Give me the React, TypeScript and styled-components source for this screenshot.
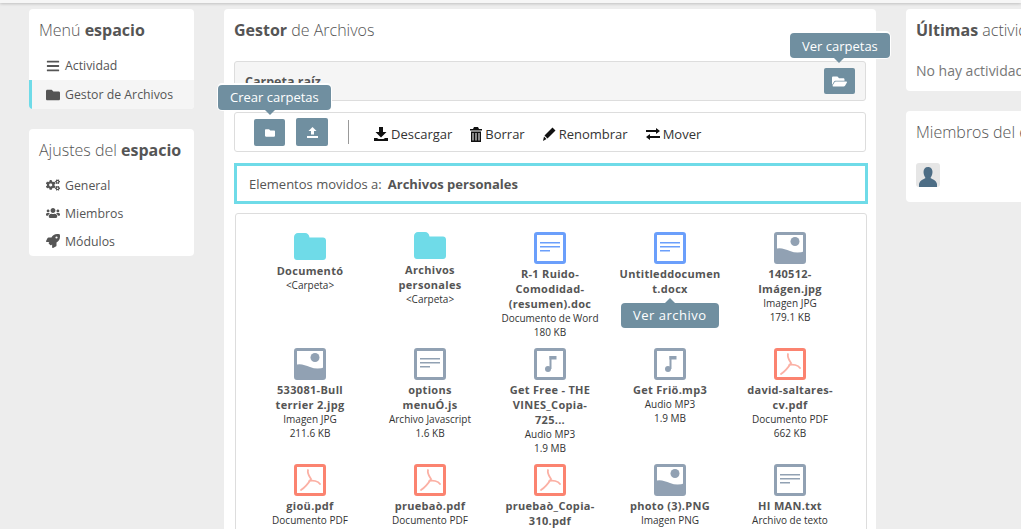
import React from 'react';
import styled, { createGlobalStyle } from 'styled-components';
import { FaBars, FaFolder, FaFolderOpen, FaCogs, FaUsers, FaRocket } from 'react-icons/fa';

const GlobalStyle = createGlobalStyle`
  html, body {
    margin: 0;
    padding: 0;
    height: 529px;
    overflow: hidden;
    background: #ededed;
    font-family: 'Open Sans', sans-serif;
    color: #555;
  }
  * { box-sizing: border-box; }
`;

type Kind = 'folder' | 'doc' | 'image' | 'text' | 'audio' | 'pdf';

interface FileItem {
  name: string;
  type?: string;
  size?: string;
  kind: Kind;
}

const files: FileItem[] = [
  { name: 'Documentó', type: '<Carpeta>', kind: 'folder' },
  { name: 'Archivos personales', type: '<Carpeta>', kind: 'folder' },
  { name: 'R-1 Ruido-Comodidad-(resumen).doc', type: 'Documento de Word', size: '180 KB', kind: 'doc' },
  { name: 'Untitleddocument.docx', kind: 'doc' },
  { name: '140512-Imágen.jpg', type: 'Imagen JPG', size: '179.1 KB', kind: 'image' },
  { name: '533081-Bull terrier 2.jpg', type: 'Imagen JPG', size: '211.6 KB', kind: 'image' },
  { name: 'options menuÓ.js', type: 'Archivo Javascript', size: '1.6 KB', kind: 'text' },
  { name: 'Get Free - THE VINES_Copia-725...', type: 'Audio MP3', size: '1.9 MB', kind: 'audio' },
  { name: 'Get Friö.mp3', type: 'Audio MP3', size: '1.9 MB', kind: 'audio' },
  { name: 'david-saltares-cv.pdf', type: 'Documento PDF', size: '662 KB', kind: 'pdf' },
  { name: 'gioü.pdf', type: 'Documento PDF', kind: 'pdf' },
  { name: 'pruebaò.pdf', type: 'Documento PDF', kind: 'pdf' },
  { name: 'pruebaò_Copia-310.pdf', kind: 'pdf' },
  { name: 'photo (3).PNG', type: 'Imagen PNG', kind: 'image' },
  { name: 'HI MAN.txt', type: 'Archivo de texto', kind: 'text' },
];

const kindColors: Record<Kind, string> = {
  folder: '#6fdbe8',
  doc: '#6b9ffb',
  image: '#91a1b3',
  text: '#91a1b3',
  audio: '#91a1b3',
  pdf: '#fb8370',
};

function FileGlyph({ kind }: { kind: Kind }) {
  const c = kindColors[kind];
  if (kind === 'folder') {
    return (
      <svg width="32" height="27" viewBox="0 0 32 27">
        <path
          d="M4 0h7c2.500 0 4 1.500 4.500 4.500H29c1.700 0 3 1.300 3 3V24c0 1.700-1.300 3-3 3H3c-1.700 0-3-1.300-3-3V4c0-2.200 1.800-4 4-4z"
          fill={c}
        />
      </svg>
    );
  }
  return (
    <svg width="32" height="32" viewBox="0 0 32 32">
      <rect x="1.500" y="1.500" width="29" height="29" rx="1.500" fill="#fff" stroke={c} strokeWidth="3" />
      {(kind === 'doc' || kind === 'text') && (
        <g fill={c}>
          <rect x="6" y="10" width="20" height="1.500" />
          <rect x="6" y="14" width="20" height="1.500" />
          <rect x="6" y="18" width="10" height="1.500" />
        </g>
      )}
      {kind === 'image' && (
        <g fill={c}>
          <circle cx="21" cy="9.500" r="4.500" />
          <path d="M1 17c5-2 10 0 15 2s10 2 15 0v12H1z" />
        </g>
      )}
      {kind === 'audio' && (
        <g fill={c}>
          <ellipse cx="14" cy="21" rx="3" ry="3" />
          <rect x="15.500" y="8" width="2" height="13" />
          <path d="M15.500 8h7v3.500h-7z" />
        </g>
      )}
      {kind === 'pdf' && (
        <path
          d="M14 6c-1 4 2 7 3 9M17 15c-3 5-7 9-10 11M15 17c4-1 9 0 11 3"
          fill="none"
          stroke="#fbb0a4"
          strokeWidth="1.800"
          strokeLinecap="round"
        />
      )}
    </svg>
  );
}

const SaveIcon = () => (
  <svg width="14" height="14" viewBox="0 0 14 14">
    <path d="M5 0h4v5h3.500L7 10.500 1.500 5H5zM0 11h3l1.500 1h5L11 11h3v3H0z" fill="currentColor" />
  </svg>
);

const TrashIcon = () => (
  <svg width="12" height="15" viewBox="0 0 12 15">
    <path
      d="M4 0h4l1 2h3v1.500H0V2h3zM1 4.500h10V15H1zm1.500 1.500v7.500h1V6zm3 0v7.500h1V6zm3 0v7.500h1V6z"
      fill="currentColor"
      fillRule="evenodd"
    />
  </svg>
);

const PencilIcon = () => (
  <svg width="13" height="14" viewBox="0 0 13 14">
    <path d="M9.500.5l3 3L4.500 11.500l-3-3zM1 9.500l2.500 2.500L0 14z" fill="currentColor" />
  </svg>
);

const TransferIcon = () => (
  <svg width="14" height="12" viewBox="0 0 14 12">
    <path d="M10 0l4 3-4 3V4H0V2h10zM4 6v2h10v2H4v2L0 9z" fill="currentColor" />
  </svg>
);

const UploadIcon = () => (
  <svg width="11" height="11" viewBox="0 0 11 11">
    <path d="M5.500 0l4 4H7v3.500H4V4H1.500zM0 9h11v2H0z" fill="currentColor" />
  </svg>
);

const TopBar = styled.div`
  height: 3px;
  background: #f6f6f6;
  box-shadow: 0 1px 3px rgba(0, 0, 0, 0.2);
`;

const Page = styled.div`
  display: flex;
  gap: 30px;
  width: 1021px;
  height: 526px;
  padding: 6px 0 0 29px;
  overflow: hidden;
`;

const Side = styled.aside`
  flex: 0 0 165px;
  display: flex;
  flex-direction: column;
  align-items: stretch;
  gap: 20px;
`;

const RightSide = styled(Side)`
  flex: 0 0 200px;
`;

const Panel = styled.section`
  background: #fff;
  border-radius: 4px;
  overflow: hidden;
`;

const Heading = styled.h2`
  margin: 0;
  padding: 10px;
  font-size: 16px;
  line-height: 22px;
  font-weight: 300;
  color: #555;
  white-space: nowrap;

  b {
    font-weight: 700;
  }
`;

const MenuList = styled.nav`
  display: flex;
  flex-direction: column;
`;

const MenuItem = styled.div<{ $active?: boolean }>`
  display: flex;
  align-items: center;
  gap: 5px;
  height: 29px;
  font-size: 12.300px;
  padding-left: ${(p) => (p.$active ? '14px' : '17px')};
  border-left: ${(p) => (p.$active ? '3px solid #6fdbe8' : '0')};
  background: ${(p) => (p.$active ? '#f5f5f5' : 'transparent')};
  color: #555;

  svg {
    width: 14px;
    height: 14px;
  }
`;

const SettingsList = styled(MenuList)`
  padding-bottom: 1px;

  ${MenuItem} {
    height: 28px;
  }
`;

const Main = styled.main`
  flex: 0 0 652px;
  min-width: 0;
  height: 540px;
  background: #fff;
  border-radius: 4px;
  padding: 0 10px;
`;

const MainHeading = styled(Heading)`
  padding: 10px 0;
  margin-bottom: 10px;
`;

const Crumb = styled.div`
  display: flex;
  align-items: center;
  justify-content: space-between;
  height: 40px;
  padding: 0 10px;
  background: #f5f5f5;
  border: 1px solid #ddd;
  border-radius: 3px;
  font-size: 12.500px;
  font-weight: 700;
  color: #555;
`;

const Toolbar = styled.div`
  display: flex;
  align-items: center;
  height: 40px;
  margin-top: 11px;
  padding: 0 0 0 19px;
  border: 1px solid #ddd;
  border-radius: 3px;
`;

const IconButton = styled.div<{ $wide?: boolean }>`
  position: relative;
  display: flex;
  align-items: center;
  justify-content: center;
  width: ${(p) => (p.$wide ? '32px' : '31px')};
  height: ${(p) => (p.$wide ? '28px' : '27px')};
  margin-top: ${(p) => (p.$wide ? '0' : '1px')};
  background: #708fa0;
  border-radius: 2px;
  color: #fff;
`;

const CrumbButton = styled(IconButton)`
  height: 26px;
  margin-top: 0;
`;

const Tip = styled.div`
  position: absolute;
  z-index: 3;
  bottom: calc(100% + 9px);
  left: 50%;
  padding: 0 12px;
  height: 25px;
  line-height: 24px;
  background: #708fa0;
  border-radius: 4px;
  color: #fff;
  font-size: 13px;
  font-weight: 400;
  white-space: nowrap;
  box-shadow: 0 0 0 1px #fff, 0 -2px 0 #fff;

  &::after {
    content: '';
    position: absolute;
    left: 50%;
    top: 100%;
    margin-left: -5px;
    border: 5px solid transparent;
    border-bottom-width: 0;
    border-top-color: #708fa0;
  }
`;

const CreateTip = styled(Tip)`
  margin-left: -51.500px;

  &::after {
    left: 52px;
  }
`;

const FolderTip = styled(Tip)`
  bottom: calc(100% + 10px);
  margin-left: -49.500px;
  line-height: 26px;

  &::after {
    left: 49px;
  }
`;

const FileTip = styled(Tip)`
  bottom: auto;
  top: 71px;
  left: 0;
  margin-left: 11px;
  letter-spacing: 0.500px;
  box-shadow: none;

  &::after {
    top: auto;
    bottom: 100%;
    border-width: 0 5px 5px;
    border-color: transparent transparent #708fa0;
  }
`;

const ButtonGap = styled.div`
  width: 11px;
`;

const Divider = styled.div`
  width: 1px;
  height: 24px;
  margin: 0 16px 0 20px;
  background: #999;
`;

const Action = styled.div`
  display: flex;
  align-items: center;
  gap: 3px;
  margin: 4px 9px 0;
  font-size: 13px;
  color: #333;

  svg {
    color: #111;
  }
`;

const Notice = styled.div`
  height: 41px;
  width: 634px;
  margin-top: 11px;
  padding: 1px 0 0 12px;
  display: flex;
  align-items: center;
  gap: 6px;
  border: 3px solid #6fdbe8;
  font-size: 13px;

  b {
    font-weight: 700;
  }
`;

const Browser = styled.div`
  width: 632px;
  margin: 9px 0 0 1px;
  padding: 18px 0 0 14px;
  border: 1px solid #ddd;
  border-radius: 3px;
  display: grid;
  grid-template-columns: repeat(5, 120px);
  grid-auto-rows: 116px;
  height: 400px;
`;

const Item = styled.div`
  position: relative;
  display: flex;
  flex-direction: column;
  align-items: center;
  text-align: center;

  &:first-child {
    padding-top: 1px;
  }
`;

const IconSlot = styled.div`
  display: flex;
  height: 34px;
  align-items: flex-start;
`;

const FolderSlot = styled(IconSlot)`
  height: 30px;
`;

const FileName = styled.div`
  max-width: 101px;
  font-size: 11px;
  line-height: 15px;
  font-weight: 700;
  letter-spacing: 0.300px;
  color: #555;
  word-break: break-word;
`;

const FileMeta = styled.div`
  font-size: 10px;
  line-height: 14px;
  color: #333;
`;

const ActivityText = styled.p`
  margin: 0;
  padding: 10px 10px 0;
  font-size: 14px;
  line-height: 20px;
  white-space: nowrap;
  color: #777;
  height: 40px;
`;

const AvatarWrap = styled.div`
  padding: 10px 10px 15px;
  height: 49px;
`;

const Avatar = styled.svg`
  display: block;
  width: 24px;
  height: 24px;
  border-radius: 3px;
`;

export default function App() {
  return (
    <>
      <GlobalStyle />
      <TopBar />
      <Page>
        <Side>
          <Panel>
            <Heading>
              Menú <b>espacio</b>
            </Heading>
            <MenuList>
              <MenuItem>
                <FaBars /> Actividad
              </MenuItem>
              <MenuItem $active>
                <FaFolder /> Gestor de Archivos
              </MenuItem>
            </MenuList>
          </Panel>
          <Panel>
            <Heading>
              Ajustes del <b>espacio</b>
            </Heading>
            <SettingsList>
              <MenuItem>
                <FaCogs /> General
              </MenuItem>
              <MenuItem>
                <FaUsers /> Miembros
              </MenuItem>
              <MenuItem>
                <FaRocket /> Módulos
              </MenuItem>
            </SettingsList>
          </Panel>
        </Side>

        <Main>
          <MainHeading>
            <b>Gestor</b> de Archivos
          </MainHeading>
          <Crumb>
            Carpeta raíz
            <CrumbButton>
              <FaFolderOpen size={15} />
              <FolderTip>Ver carpetas</FolderTip>
            </CrumbButton>
          </Crumb>
          <Toolbar>
            <IconButton>
              <FaFolder size={10} />
              <CreateTip>Crear carpetas</CreateTip>
            </IconButton>
            <ButtonGap />
            <IconButton $wide>
              <UploadIcon />
            </IconButton>
            <Divider />
            <Action>
              <SaveIcon /> Descargar
            </Action>
            <Action>
              <TrashIcon /> Borrar
            </Action>
            <Action>
              <PencilIcon /> Renombrar
            </Action>
            <Action>
              <TransferIcon /> Mover
            </Action>
          </Toolbar>
          <Notice>
            Elementos movidos a: <b>Archivos personales</b>
          </Notice>
          <Browser>
            {files.map((f) => {
              const Slot = f.kind === 'folder' ? FolderSlot : IconSlot;
              return (
                <Item key={f.name}>
                  <Slot>
                    <FileGlyph kind={f.kind} />
                  </Slot>
                  <FileName>{f.name}</FileName>
                  {f.type && <FileMeta>{f.type}</FileMeta>}
                  {f.size && <FileMeta>{f.size}</FileMeta>}
                  {f.name === 'Untitleddocument.docx' && <FileTip>Ver archivo</FileTip>}
                </Item>
              );
            })}
          </Browser>
        </Main>

        <RightSide>
          <Panel>
            <Heading>
              <b>Últimas</b> actividades
            </Heading>
            <ActivityText>No hay actividades</ActivityText>
          </Panel>
          <Panel>
            <Heading>Miembros del espacio</Heading>
            <AvatarWrap>
              <Avatar viewBox="0 0 24 24">
                <rect width="24" height="24" fill="#e6e6e6" />
                <path
                  d="M12 4c3 0 4.500 2.300 4.500 5S15 14 14.500 15c2 1.500 5.500 2 6.500 6v3H3v-3c1-4 4.500-4.500 6.500-6C9 14 7.500 12 7.500 9S9 4 12 4z"
                  fill="#4d6d85"
                />
              </Avatar>
            </AvatarWrap>
          </Panel>
        </RightSide>
      </Page>
    </>
  );
}
